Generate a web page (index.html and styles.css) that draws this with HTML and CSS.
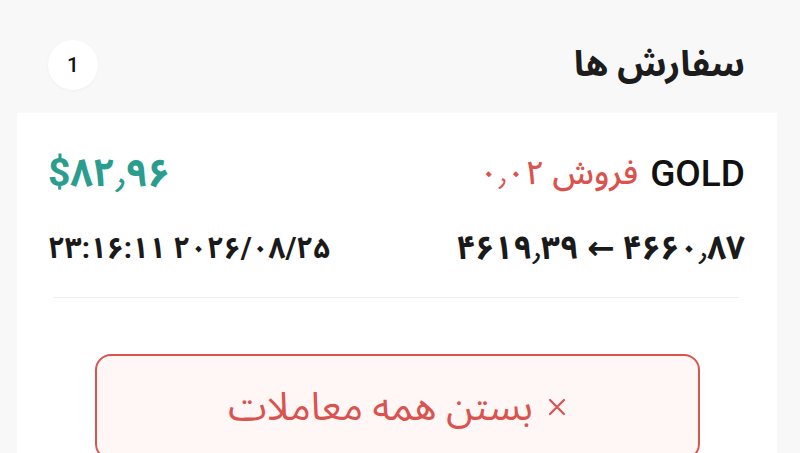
FILE: index.html
```html
<!DOCTYPE html>
<html lang="fa" dir="rtl">
<head>
<meta charset="utf-8">
<link rel="stylesheet" href="styles.css">
</head>
<body>
<div class="page">
  <header class="head">
    <h1 class="title">سفارش ها</h1>
    <span class="badge">1</span>
  </header>
  <section class="card">
    <div class="row row-top">
      <div class="sym"><span class="ticker">GOLD</span><span class="side">فروش ۰٫۰۲</span></div>
      <div class="profit">$۸۲٫۹۶</div>
    </div>
    <div class="row row-sub">
      <div class="prices">۴۶۶۰٫۸۷ ← ۴۶۱۹٫۳۹</div>
      <div class="date">۲۰۲۶/۰۸/۲۵ ۲۳:۱۶:۱۱</div>
    </div>
    <div class="divider"></div>
    <button class="close-all">
      <svg class="x" width="20" height="20" viewBox="0 0 20 20" aria-hidden="true"><path d="M3 3 L17 17 M17 3 L3 17" stroke="currentColor" stroke-width="2.2" stroke-linecap="round" fill="none"/></svg>
      <span>بستن همه معاملات</span>
    </button>
  </section>
</div>
</body>
</html>
```
FILE: styles.css
```css
* { box-sizing: border-box; }
html, body { margin: 0; padding: 0; }
body {
  background: #f8f8f8;
  font-family: Roboto, "Noto Sans Arabic", "DejaVu Sans", sans-serif;
  color: #1a1a1a;
  overflow: hidden;
  height: 453px;
}
.page {
  padding: 0 23px 0 17px;
}
.head {
  display: flex;
  align-items: center;
  justify-content: space-between;
  height: 113px;
  padding: 16px 32px 0 31px;
}
.title {
  margin: 0;
  font-size: 36px;
  font-weight: 700;
  color: #1c1c1c;
}
.badge {
  width: 50px;
  height: 50px;
  border-radius: 50%;
  background: #fff;
  box-shadow: 0 1px 3px rgba(0,0,0,0.04);
  display: flex;
  align-items: center;
  justify-content: center;
  font-size: 21px;
  font-weight: 500;
  color: #111;
}
.card {
  background: #fff;
  padding: 30px 32px 0 31px;
  min-height: 400px;
}
.row {
  display: flex;
  align-items: center;
  justify-content: space-between;
}
.row-top { height: 60px; }
.sym {
  display: flex;
  align-items: center;
  gap: 12px;
}
.ticker {
  font-size: 37px;
  font-weight: 500;
  color: #111;
}
.side {
  font-size: 33px;
  font-weight: 500;
  color: #d9534f;
}
.profit {
  font-size: 39px;
  font-weight: 700;
  color: #2a9d8f;
}
.row-sub {
  height: 50px;
  margin-top: 20px;
}
.prices {
  font-size: 33px;
  font-weight: 700;
  color: #1a1a1a;
}
.date {
  font-size: 29.5px;
  font-weight: 700;
  color: #1a1a1a;
}
.divider {
  height: 1px;
  background: #eeeeee;
  margin: 24px 6px 0 6px;
}
.close-all {
  display: flex;
  align-items: center;
  justify-content: center;
  gap: 14px;
  margin: 56px 45px 0 47px;
  width: calc(100% - 92px);
  height: 106px;
  border: 2px solid #d9534f;
  border-radius: 16px;
  background: #fff6f6;
  color: #d9534f;
  font-family: inherit;
  font-size: 39px;
  direction: rtl;
  padding: 0;
}
.x { flex: none; }
```
